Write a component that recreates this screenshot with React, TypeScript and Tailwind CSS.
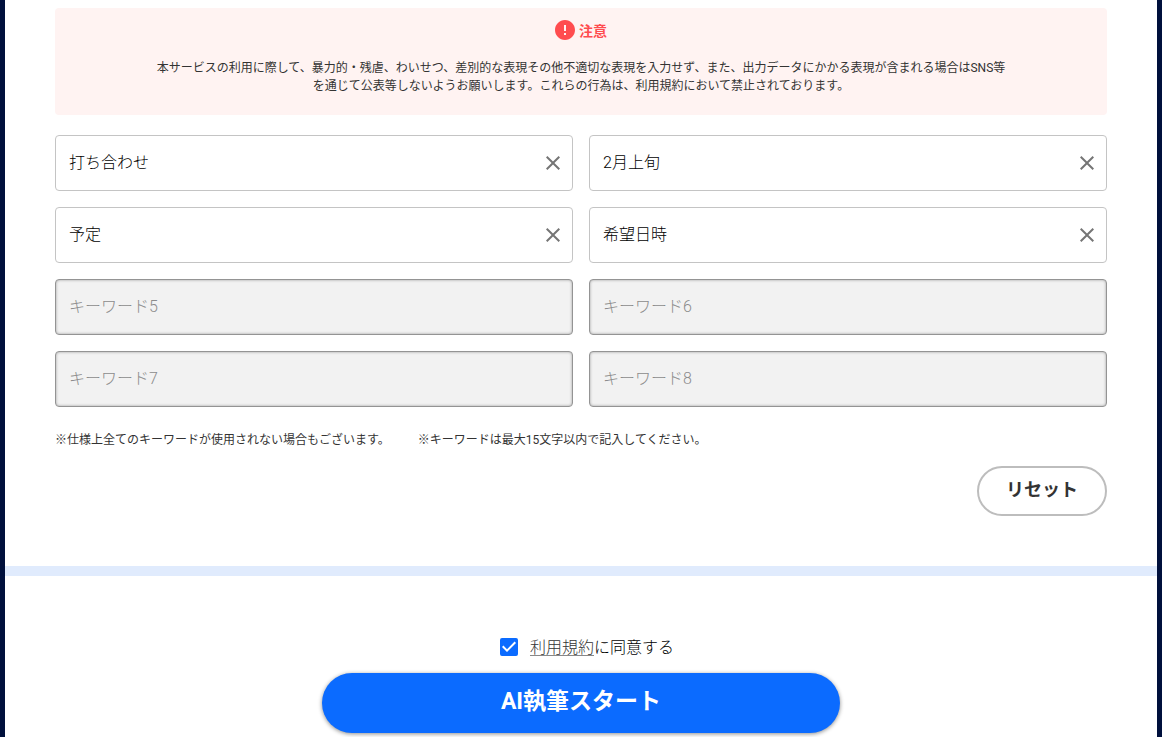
import { useState } from "react";

const FONT = "font-['Roboto','Noto_Sans_CJK_JP',sans-serif]";

const INITIAL_KEYWORDS = ["打ち合わせ", "2月上旬", "予定", "希望日時", "", "", "", ""];

interface KeywordFieldProps {
  index: number;
  value: string;
  onChange: (value: string) => void;
}

function KeywordField({ index, value, onChange }: KeywordFieldProps) {
  const label = `キーワード${index + 1}`;
  const box = value
    ? "border-[#c4c4c4] bg-white"
    : "border-[#949494] bg-[#f2f2f2] shadow-[inset_0_0_3px_rgba(0,0,0,0.35)]";

  return (
    <div className={`flex h-14 items-center rounded border pl-[13px] pr-[7px] ${box}`}>
      <input
        type="text"
        aria-label={label}
        placeholder={label}
        maxLength={15}
        value={value}
        onChange={(e) => onChange(e.target.value)}
        className="min-w-0 flex-1 bg-transparent text-base font-light text-black outline-none placeholder:text-[#8c8c8c]"
      />
      {value && (
        <button
          type="button"
          aria-label={`${label}をクリア`}
          onClick={() => onChange("")}
          className="flex size-6 items-center justify-center text-[#757575]"
        >
          <svg viewBox="0 0 24 24" className="size-6" fill="currentColor">
            <path d="M19 6.41 17.59 5 12 10.59 6.41 5 5 6.41 10.59 12 5 17.59 6.41 19 12 13.41 17.59 19 19 17.59 13.41 12z" />
          </svg>
        </button>
      )}
    </div>
  );
}

function Notice() {
  return (
    <div className="rounded bg-[#fff3f2] px-6 pt-3 pb-5 text-center">
      <div className="flex h-5 items-center justify-center gap-1 text-[#ff4c4f]">
        <svg viewBox="2 2 20 20" className="size-5" fill="currentColor">
          <path d="M12 2C6.48 2 2 6.48 2 12s4.48 10 10 10 10-4.48 10-10S17.52 2 12 2zm1 15h-2v-2h2v2zm0-4h-2V7h2v6z" />
        </svg>
        <p className="pt-0.5 text-sm font-bold">注意</p>
      </div>
      <p className="mx-auto mt-[19px] max-w-[856px] text-xs leading-[18px] text-[#333]">
        本サービスの利用に際して、暴力的・残虐、わいせつ、差別的な表現その他不適切な表現を入力せず、また、出力データにかかる表現が含まれる場合はSNS等を通じて公表等しないようお願いします。これらの行為は、利用規約において禁止されております。
      </p>
    </div>
  );
}

export default function App() {
  const [keywords, setKeywords] = useState(INITIAL_KEYWORDS);
  const [agreed, setAgreed] = useState(true);

  const updateKeyword = (index: number, value: string) => {
    setKeywords(keywords.map((k, i) => (i === index ? value : k)));
  };

  return (
    <div className={`min-h-screen bg-[#00103c] px-[5px] text-[#333] ${FONT}`}>
      <main className="min-h-screen bg-white">
        {/* Keywords */}
        <section className="border-b-10 border-[#e0ebfd] px-[50px] pt-2 pb-[50px]">
          <Notice />

          <div className="mt-5 grid grid-cols-2 gap-4">
            {keywords.map((keyword, i) => (
              <KeywordField
                key={i}
                index={i}
                value={keyword}
                onChange={(value) => updateKeyword(i, value)}
              />
            ))}
          </div>

          <div className="mt-6 flex flex-wrap gap-x-7 text-xs leading-[18px]">
            <p>※仕様上全てのキーワードが使用されない場合もございます。</p>
            <p>※キーワードは最大15文字以内で記入してください。</p>
          </div>

          <div className="mt-[17px] flex justify-end">
            <button
              type="button"
              onClick={() => setKeywords(keywords.map(() => ""))}
              className="h-[50px] w-[130px] rounded-full border-2 border-[#bdbdbd] bg-white pb-0.5 text-lg font-bold"
            >
              リセット
            </button>
          </div>
        </section>

        {/* Agreement and start */}
        <section className="flex flex-col items-center px-[50px] pt-[59px]">
          <div className="flex h-6 items-center">
            <span className="relative mx-3 flex">
              <input
                id="agree"
                type="checkbox"
                checked={agreed}
                onChange={(e) => setAgreed(e.target.checked)}
                className="peer size-[18px] appearance-none rounded-xs border-2 border-[#757575] checked:border-[#0b6bff] checked:bg-[#0b6bff]"
              />
              <svg
                viewBox="3 3 18 18"
                className="pointer-events-none absolute inset-0 hidden size-[18px] peer-checked:block"
                fill="#fff"
              >
                <path d="M10 17l-5-5 1.41-1.41L10 14.17l7.59-7.59L19 8l-9 9z" />
              </svg>
            </span>
            <label htmlFor="agree" className="pt-px text-base font-light text-black">
              <a href="#terms" className="text-[#333] underline decoration-[#888] decoration-1 underline-offset-2">
                利用規約
              </a>
              に同意する
            </label>
          </div>

          <button
            type="button"
            disabled={!agreed}
            className="mt-[14px] h-[60px] w-full max-w-[518px] rounded-full bg-[#0b6bff] pb-0.5 text-[23px] font-bold text-white shadow-[0_1px_4px_rgba(0,0,0,0.45)] disabled:bg-gray-300"
          >
            AI執筆スタート
          </button>
        </section>
      </main>
    </div>
  );
}
